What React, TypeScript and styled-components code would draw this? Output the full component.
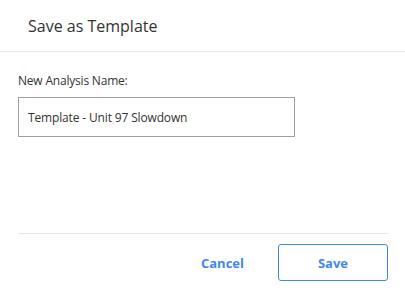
import styled, { createGlobalStyle } from "styled-components";

const GlobalStyle = createGlobalStyle`
	body {
		margin: 0;
		background: #fff;
		font-family: "Open Sans", "Noto Sans", sans-serif;
		color: #333;
	}
`;

const App = () => {
	return (
		<Dialog>
			<GlobalStyle />
			<Header>
				<h2>Save as Template</h2>
			</Header>
			<Body>
				<Label htmlFor="analysis-name">New Analysis Name:</Label>
				<NameInput
					id="analysis-name"
					defaultValue="Template - Unit 97 Slowdown"
				/>
			</Body>
			<Footer>
				<TextButton>Cancel</TextButton>
				<OutlineButton>Save</OutlineButton>
			</Footer>
		</Dialog>
	);
};

const Dialog = styled.div`
	display: flex;
	flex-direction: column;
	width: 405px;
	height: 299px;
	box-sizing: border-box;
`;

const Header = styled.div`
	display: flex;
	align-items: center;
	height: 51px;
	padding-left: 28px;
	border-bottom: 1px solid #e8e8e8;

	h2 {
		margin: 0;
		font-size: 16px;
		font-weight: 400;
		color: #333;
	}
`;

const Body = styled.div`
	display: flex;
	flex-direction: column;
	flex: 1;
	padding: 20px 18px 0;
`;

const Label = styled.label`
	font-size: 12px;
	line-height: 17px;
	letter-spacing: -0.2px;
	color: #333;
	margin-bottom: 8px;
`;

const NameInput = styled.input`
	width: 277px;
	height: 40px;
	box-sizing: border-box;
	padding: 0 9px;
	border: 1px solid #a0a0a0;
	border-radius: 0;
	font-family: "Open Sans", "Noto Sans", sans-serif;
	font-size: 12px;
	letter-spacing: -0.15px;
	color: #333;
	outline: none;
`;

const Footer = styled.div`
	display: flex;
	justify-content: flex-end;
	align-items: center;
	gap: 34px;
	margin: 0 17px 0 18px;
	padding: 10px 0 18px;
	border-top: 1px solid #e8e8e8;
`;

const TextButton = styled.button`
	background: none;
	border: none;
	padding: 0;
	font-family: "Open Sans", "Noto Sans", sans-serif;
	font-size: 13px;
	font-weight: 700;
	color: #3f88ee;
	cursor: pointer;
`;

const OutlineButton = styled.button`
	width: 110px;
	height: 37px;
	background: #fff;
	border: 1px solid #3f88ee;
	border-radius: 3px;
	font-family: "Open Sans", "Noto Sans", sans-serif;
	font-size: 13px;
	font-weight: 700;
	color: #3f88ee;
	cursor: pointer;
`;

export default App;
